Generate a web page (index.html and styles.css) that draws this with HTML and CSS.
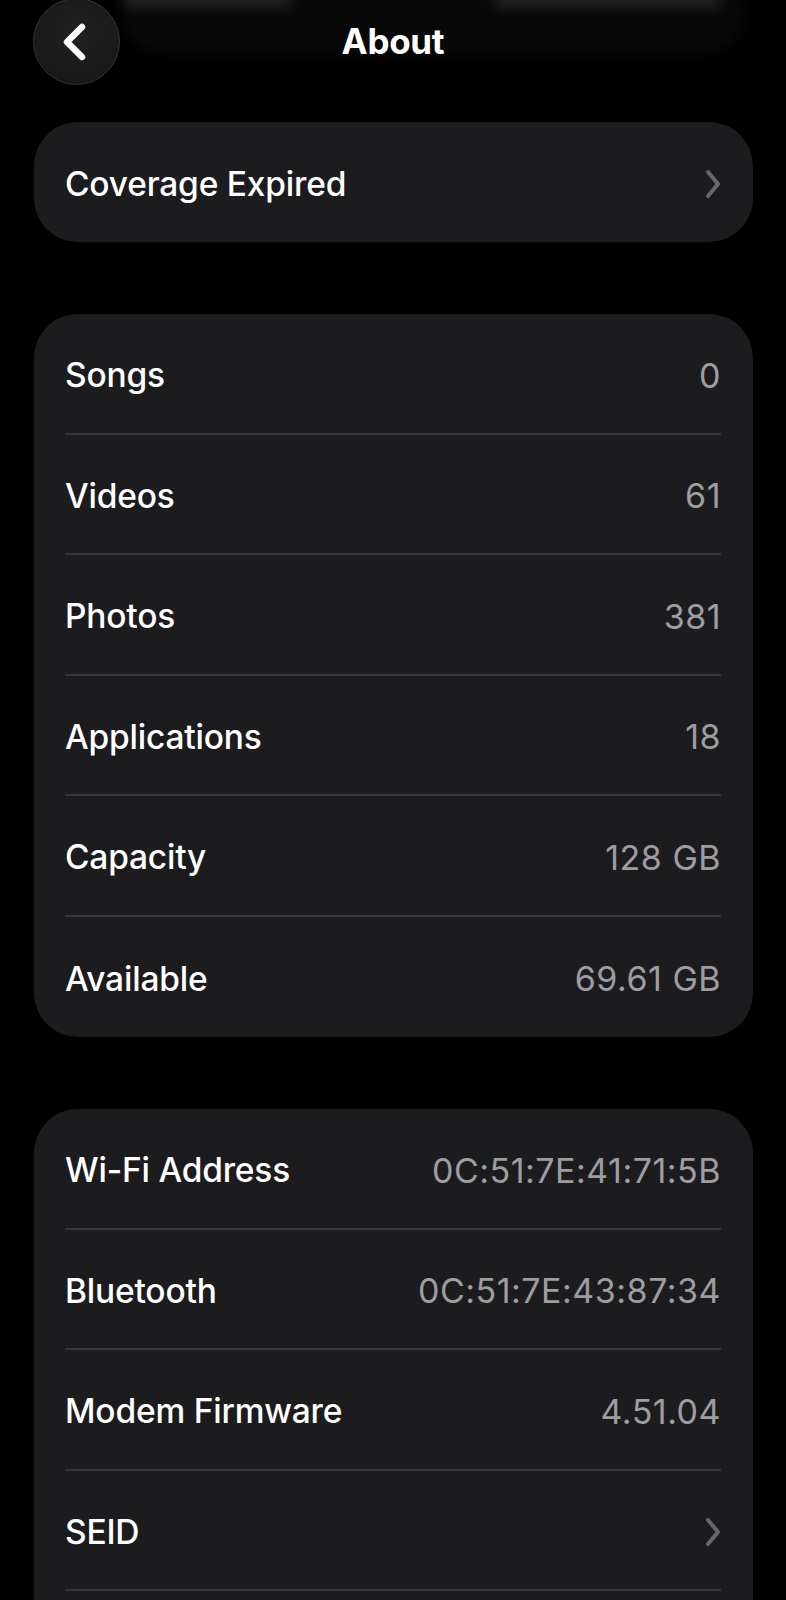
FILE: index.html
```html
<!DOCTYPE html>
<html lang="en">
<head>
  <meta charset="UTF-8">
  <meta name="viewport" content="width=device-width, initial-scale=1.0">
  <title>About</title>
  <link rel="stylesheet" href="styles.css">
</head>
<body>
  <div class="screen">
    <!-- Navigation bar (content scrolled under it shows blurred) -->
    <header class="nav">
      <div class="nav-blur">
        <span class="ghost ghost-left"></span>
        <span class="ghost ghost-right"></span>
      </div>
      <button class="back-btn" aria-label="Back">
        <svg width="30" height="44" viewBox="0 0 30 44">
          <path d="M23 7 L8 22 L23 37" fill="none" stroke="#fff" stroke-width="6.5" stroke-linecap="round" stroke-linejoin="round"/>
        </svg>
      </button>
      <h1 class="nav-title">About</h1>
      <span></span>
    </header>

    <section class="card card-single">
      <div class="row">
        <span class="label">Coverage Expired</span>
        <svg class="chevron" width="18" height="32" viewBox="0 0 18 32">
          <path d="M4 4 L14 16 L4 28" fill="none" stroke="#66666b" stroke-width="4" stroke-linecap="round" stroke-linejoin="round"/>
        </svg>
      </div>
    </section>

    <section class="card">
      <div class="row"><span class="label">Songs</span><span class="value">0</span></div>
      <div class="row"><span class="label">Videos</span><span class="value">61</span></div>
      <div class="row"><span class="label">Photos</span><span class="value">381</span></div>
      <div class="row"><span class="label">Applications</span><span class="value">18</span></div>
      <div class="row"><span class="label">Capacity</span><span class="value">128 GB</span></div>
      <div class="row"><span class="label">Available</span><span class="value">69.61 GB</span></div>
    </section>

    <section class="card card-open">
      <div class="row"><span class="label">Wi-Fi Address</span><span class="value">0C:51:7E:41:71:5B</span></div>
      <div class="row"><span class="label">Bluetooth</span><span class="value">0C:51:7E:43:87:34</span></div>
      <div class="row"><span class="label">Modem Firmware</span><span class="value">4.51.04</span></div>
      <div class="row">
        <span class="label">SEID</span>
        <svg class="chevron" width="18" height="32" viewBox="0 0 18 32">
          <path d="M4 4 L14 16 L4 28" fill="none" stroke="#66666b" stroke-width="4" stroke-linecap="round" stroke-linejoin="round"/>
        </svg>
      </div>
      <div class="row row-cut"></div>
    </section>
  </div>
</body>
</html>
```

FILE: styles.css
```css
/* Basic Reset */
* { margin: 0; padding: 0; box-sizing: border-box; }
html, body {
  background: #000;
}
body {
  font-family: Inter, "Noto Sans", sans-serif;
  color: #fff;
}
.screen {
  width: 786px;
  height: 1600px;
  overflow: hidden;
}

/* Nav bar */
.nav {
  position: relative;
  height: 78px;
  display: grid;
  grid-template-columns: 1fr auto 1fr;
  align-items: center;
  padding: 0 33px;
}
.nav-blur {
  position: absolute;
  left: 122px;
  right: 40px;
  top: -30px;
  height: 84px;
  border-radius: 40px;
  background: #080808;
  filter: blur(6px);
}
.ghost {
  position: absolute;
  top: 25px;
  height: 12px;
  border-radius: 6px;
  background: #262626;
}
.ghost-left {
  left: 0;
  width: 170px;
}
.ghost-right {
  left: 372px;
  width: 227px;
}
.back-btn {
  position: relative;
  width: 87px;
  height: 87px;
  margin-top: -2px;
  border-radius: 50%;
  border: 1px solid #343436;
  background: radial-gradient(circle at 50% 40%, #222224, #151516);
  display: flex;
  align-items: center;
  justify-content: center;
  padding-right: 6px;
  cursor: pointer;
}
.nav-title {
  position: relative;
  font-size: 35px;
  font-weight: 700;
  letter-spacing: -0.3px;
  text-align: center;
  margin-top: -3px;
}

/* Cards */
.card {
  background: #1c1c1e;
  border-radius: 44px;
  margin: 0 33px 0 34px;
}
.card-single {
  margin-top: 44px;
}
.card-single .row {
  height: 120px;
}
.card + .card {
  margin-top: 72px;
}
.card-open {
  border-radius: 44px 44px 0 0;
}

.row {
  height: 120.5px;
  margin: 0 32px 0 31px;
  padding-top: 4px;
  display: flex;
  align-items: center;
  justify-content: space-between;
  border-bottom: 2px solid #38383a;
}
.card .row:last-child {
  border-bottom: none;
}
.row-cut {
  height: 10px;
}
.label {
  font-size: 33.5px;
  font-weight: 500;
  letter-spacing: -0.2px;
}
.value {
  font-size: 34px;
  font-weight: 400;
  color: #9d9da2;
  letter-spacing: 0.5px;
}
.chevron {
  margin-right: -1px;
}
```
